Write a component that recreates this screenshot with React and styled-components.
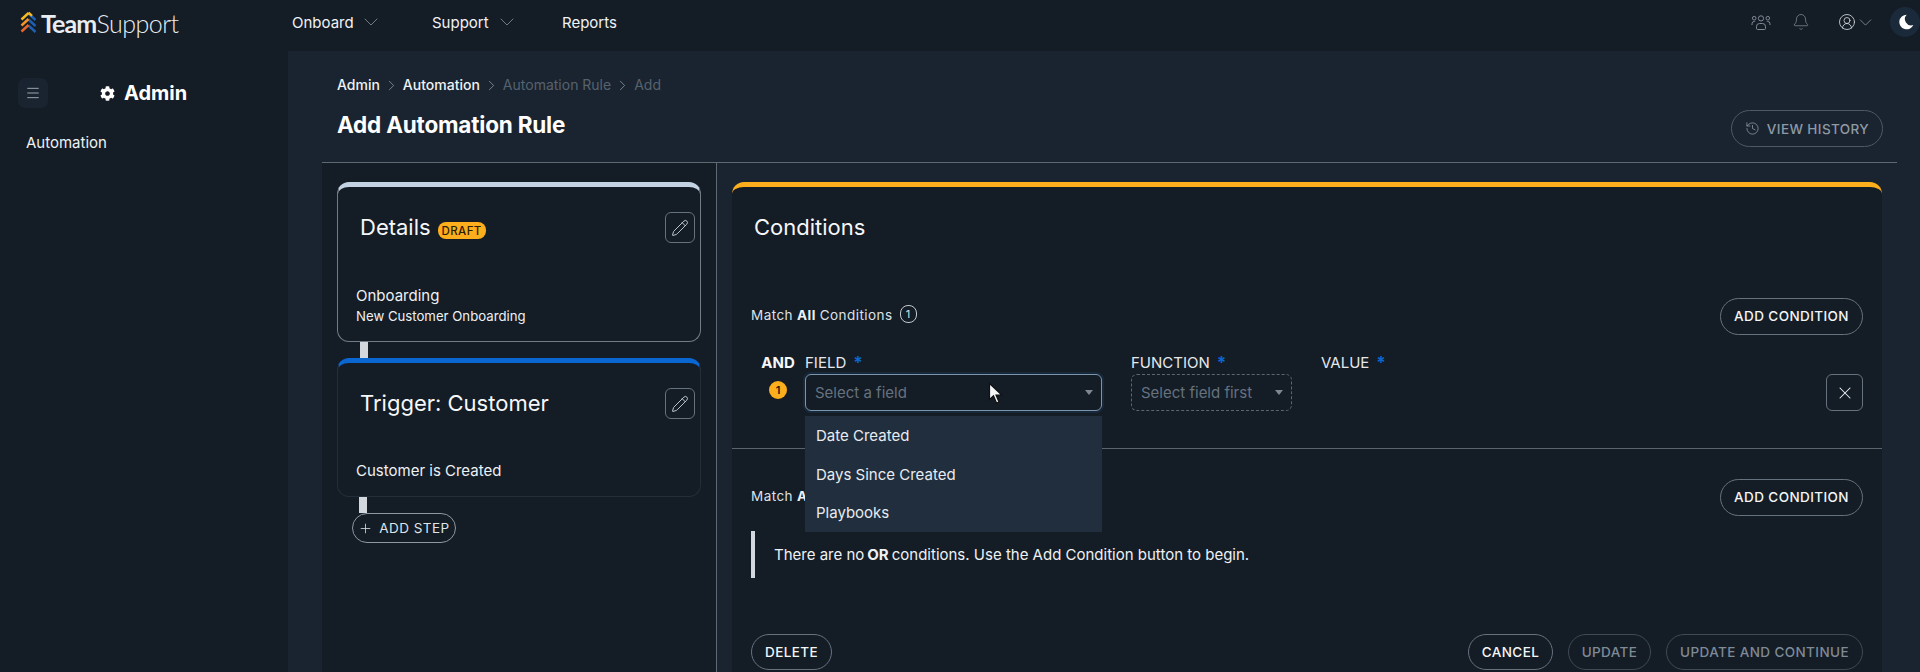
import React from 'react';
import styled, { createGlobalStyle } from 'styled-components';
import { ChevronDown, ChevronRight, Pencil, History, Plus, X, Bell, CircleUserRound, Menu } from 'lucide-react';
import { FaCog } from 'react-icons/fa';

const Global = createGlobalStyle`
  html, body { margin: 0; padding: 0; background: #141c26; }
  body { font-family: Inter, "Liberation Sans", sans-serif; color: #f2f5f8; overflow: hidden; }
  * { box-sizing: border-box; }
`;

const Page = styled.div`
  width: 1920px; height: 672px; overflow: hidden; display: flex; flex-direction: column; background: #141c26; position: relative;
`;
const Header = styled.header`
  height: 51px; flex: none; display: flex; align-items: center; background: #141c26; padding-bottom: 7px;
`;
const LogoBox = styled.div`
  width: 292px; flex: none; display: flex; align-items: center; padding-left: 20px; height: 100%;
`;
const LogoText = styled.div`
  margin-left: 4px; font-family: Lato, Inter, sans-serif; font-size: 25px; line-height: 30px; color: #e8edf2; letter-spacing: -0.5px; font-weight: 300; margin-top: 1px;
  b { font-weight: 700; letter-spacing: -0.9px; }
`;
const Nav = styled.nav`display: flex; align-items: center;`;
const NavItem = styled.div`
  display: flex; align-items: center; font-size: 15px; font-weight: 400; color: #f0f3f6; width: ${p => p.$w}px; gap: ${p => p.$gap || 0}px;
  svg { color: #7c8793; }
`;
const RightIcons = styled.div`
  margin-left: auto; display: flex; align-items: center; color: #808b97; height: 100%;
`;
const IconSlot = styled.span`display: flex; align-items: center; margin-left: ${p => p.$ml || 0}px; color: ${p => p.$c || 'inherit'};`;
const MoonCircle = styled.div`
  width: 30px; height: 30px; margin-left: 14px; border-radius: 50%; background: #1b2a3a; display: flex; align-items: center; padding-left: 8px;
`;

const Body = styled.div`flex: 1; min-height: 0; display: flex;`;
const Sidebar = styled.aside`width: 288px; flex: none; background: #141c26; padding: 27px 18px 0;`;
const SideTop = styled.div`display: flex; align-items: center;`;
const Burger = styled.div`
  width: 30px; height: 30px; border-radius: 7px; background: #1a2430; display: flex; align-items: center; justify-content: center; color: #b4bdc6;
`;
const SideTitle = styled.div`
  margin-left: 52px; display: flex; align-items: center; gap: 9px; font-size: 20px; font-weight: 700; color: #fff;
`;
const SideLink = styled.div`margin: 25px 0 0 8px; font-size: 15px; line-height: 20px; color: #eef2f5;`;

const Main = styled.main`flex: 1; min-width: 0; background: #1a2430; padding: 0 23px 0 34px; display: flex; flex-direction: column;`;
const Head = styled.div`height: 112px; flex: none; padding: 25px 15px 0; border-bottom: 1px solid #5f6974; position: relative;`;
const Crumbs = styled.div`display: flex; align-items: center; font-size: 14px; line-height: 18px; height: 18px;`;
const Crumb = styled.span`color: ${p => p.$dim ? '#56626e' : '#eef2f5'}; font-weight: ${p => p.$dim ? 400 : 450};`;
const CrumbSep = styled.span`display: flex; width: 23px; justify-content: center; color: #9aa4ae;`;
const Title = styled.h1`margin: 15px 0 0; font-size: 22.5px; line-height: 32px; font-weight: 700; color: #fff; letter-spacing: -0.2px;`;
const HistoryBtn = styled.button`
  position: absolute; right: 14px; top: 59px; height: 37px; width: 152px; border: 1px solid #4e5965; background: transparent; border-radius: 19px; color: #8f9aa5;
  font: 450 13.5px Inter, sans-serif; letter-spacing: .4px; display: flex; align-items: center; justify-content: center; gap: 7px; padding: 0;
`;
const Columns = styled.div`flex: 1; min-height: 0; display: flex;`;
const LeftCol = styled.div`width: 395px; flex: none; padding: 19px 15px 0; border-right: 1px solid #5f6974; background: #141c26;`;
const RightCol = styled.div`flex: 1; padding: 19px 15px 0;`;

const Card = styled.section`
  position: relative; height: ${p => p.$h}px; background: #141c26; border-radius: 12px; border: 1px solid ${p => p.$border}; border-top: 5px solid ${p => p.$top};
`;
const CardTitle = styled.div`
  position: absolute; left: 22px; top: 24.5px; font-size: 22px; line-height: 30px; font-weight: 400; color: #f5f7f9; display: flex; align-items: center;
`;
const Draft = styled.span`
  margin-left: 7px; margin-top: 8px; height: 17px; width: 48px; border-radius: 8px; background: #fdae1c; color: #2a2005; font-size: 11.5px; font-weight: 500; letter-spacing: .4px; display: flex; align-items: center; justify-content: center;
`;
const EditBtn = styled.button`
  position: absolute; right: 5px; top: ${p => p.$t}px; width: 30px; height: 31px; background: transparent; border: 1px solid #65717c; border-radius: 6px; color: #c9d0d7; display: flex; align-items: center; justify-content: center; padding: 0;
`;
const CardBody = styled.div`position: absolute; left: 18px; bottom: ${p => p.$b}px; `;
const CardLine = styled.div`font-size: ${p => p.$s || 15}px; line-height: ${p => p.$lh || 20}px; color: #eef1f4;`;
const Connector = styled.div`width: 8px; height: 16px; margin-left: ${p => p.$ml}px; background: #d3d8de;`;

const Pill = styled.button`
  height: ${p => p.$h || 36}px; width: ${p => p.$w}px; flex: none; border-radius: 20px; border: 1px solid ${p => p.$off ? '#3f4a56' : '#66727e'}; background: transparent;
  color: ${p => p.$off ? '#7f8a96' : '#f3f6f8'}; font: 450 13.5px Inter, sans-serif; letter-spacing: .4px; display: flex; align-items: center; justify-content: center; gap: 6px; padding: 0;
`;
const AddStep = styled(Pill)`margin-left: 15px; color: #dfe4e9; font-weight: 400; border-color: #8d98a3; letter-spacing: .45px;`;

const Panel = styled.section`
  position: relative; height: 520px; background: #141c26; border-radius: 12px 12px 0 0; border-top: 5px solid #fdae1c;
`;
const PanelTitle = styled.div`padding: 24.5px 23px 0 23px; margin-left: -1px; font-size: 22px; line-height: 30px; color: #f5f7f9; height: 74px;`;
const Group = styled.div`height: ${p => p.$h}px; padding: ${p => p.$pt}px 19px 0; border-bottom: ${p => p.$line ? '1px solid #59646f' : 'none'};`;
const GroupHead = styled.div`display: flex; align-items: center; justify-content: space-between; height: 36px;`;
const MatchText = styled.div`
  font-size: 13.5px; letter-spacing: .45px; font-weight: 400; color: #dde2e7; display: flex; align-items: center; margin-top: -2px;
  b { font-weight: 700; margin: 0 4px; color: #eef1f4; }
`;
const CountBadge = styled.span`
  margin-left: 7px; margin-top: -3px; width: 17px; height: 18px; border: 1px solid #c2c9d0; border-radius: 8px; font-size: 11px; display: flex; align-items: center; justify-content: center;
`;
const Row = styled.div`display: flex; margin-top: 19px; position: relative; height: 58px;`;
const AndCol = styled.div`width: 54px; flex: none; display: flex; flex-direction: column; align-items: center;`;
const AndLabel = styled.div`font-size: 15px; font-weight: 700; line-height: 20px; color: #f5f7f9;`;
const Step = styled.span`
  margin: 8px 0 0; width: 18px; height: 18px; border-radius: 50%; background: #fdae1c; color: #1d1705; font-size: 11px; font-weight: 600; display: flex; align-items: center; justify-content: center;
`;
const Field = styled.div`width: ${p => p.$w}px; flex: none; margin-right: ${p => p.$mr}px; position: relative;`;
const FieldLabel = styled.div`font-size: 15px; line-height: 20px; color: #e4e8ec; display: flex; gap: 7px; height: 21px;`;
const Star = styled.span`color: #0a66d0; font-weight: 700; font-size: 17px;`;
const Select = styled.div`
  height: 37px; border-radius: 6px; padding: 0 8px 0 9px; display: flex; align-items: center; justify-content: space-between; color: #66727e; font-size: 15px;
  border: 1px ${p => p.$dashed ? 'dashed #5a6672' : 'solid #7b95ad'};
  box-shadow: ${p => p.$dashed ? 'none' : '0 0 0 2px #17283a'};
`;
const Caret = styled.span`width: 0; height: 0; border-left: 4px solid transparent; border-right: 4px solid transparent; border-top: 5px solid #7c8793;`;
const Menu_ = styled.div`
  position: absolute; left: 0; right: 0; top: 63px; height: 116px; background: #202e3e; z-index: 3;
`;
const MenuItem = styled.div`height: 38.5px; display: flex; align-items: center; padding: 1px 11px 0; font-size: 15px; color: #e8ecf0;`;
const CloseBtn = styled.button`
  position: absolute; right: 0; top: 21px; width: 37px; height: 37px; border: 1px solid #66727e; border-radius: 6px; background: transparent; color: #eef1f4; display: flex; align-items: center; justify-content: center; padding: 0;
`;
const Quote = styled.div`
  margin-top: 16px; height: 47px; border-left: 4px solid #d3d8de; padding-left: 19px; display: flex; align-items: center; font-size: 15px; color: #eef1f4;
  b { font-weight: 700; margin: 0 3px; }
`;
const Footer = styled.div`display: flex; align-items: center; margin-top: 56px; gap: 15px;`;
const Spacer = styled.div`flex: 1;`;
const Cursor = styled.svg`position: absolute; left: 988px; top: 382px; z-index: 5;`;

const LogoMark = () => (
  <svg width="17" height="23" viewBox="0 0 17 23" fill="none" strokeWidth="2.4" strokeLinecap="butt">
    <path d="M8.5 2.5 L15.5 9 M8.5 8.5 L15.5 15 M8.5 14.5 L15.5 21" stroke="#1f5fb0" />
    <path d="M8.5 2 L1.5 8.5" stroke="#f6b91f" />
    <path d="M8.5 1.5 L12 4.8" stroke="#f6b91f" />
    <path d="M8.5 8 L1.5 14.5" stroke="#f4952a" />
    <path d="M8.5 14 L1.5 20.5" stroke="#e8652c" />
  </svg>
);
const People = () => (
  <svg width="20" height="15" viewBox="0 0 20 15" fill="none" stroke="currentColor" strokeWidth="1">
    <circle cx="10" cy="3.4" r="2.6"/><circle cx="3.2" cy="3.2" r="1.8"/><circle cx="16.8" cy="3.2" r="1.8"/>
    <path d="M5.5 13.5 v-2 a3 3 0 0 1 3 -3 h3 a3 3 0 0 1 3 3 v2 a1 1 0 0 1 -1 1 h-7 a1 1 0 0 1 -1 -1z"/>
    <path d="M1 10 v-1.2 a2.4 2.4 0 0 1 2.4 -2.4 h0.8 M19 10 v-1.2 a2.4 2.4 0 0 0 -2.4 -2.4 h-0.8"/>
  </svg>
);
const MoonIcon = () => (
  <svg width="16" height="16" viewBox="0 0 24 24"><path fill="#fff" d="M13 1a11 11 0 1 0 10 15.5A9.5 9.5 0 0 1 13 1z"/></svg>
);
const Edit = ({ t }) => <EditBtn $t={t}><Pencil size={18} strokeWidth={1.25} /></EditBtn>;

export default function App() {
  return (
    <Page>
      <Global />
      <Header>
        <LogoBox>
          <LogoMark />
          <LogoText><b>Team</b>Support</LogoText>
        </LogoBox>
        <Nav>
          <NavItem $w={140} $gap={5}>Onboard <ChevronDown size={24} strokeWidth={0.9} /></NavItem>
          <NavItem $w={130} $gap={6}>Support <ChevronDown size={24} strokeWidth={0.9} /></NavItem>
          <NavItem $w={70}>Reports</NavItem>
        </Nav>
        <RightIcons>
          <IconSlot><People /></IconSlot>
          <IconSlot $ml={21}><Bell size={18} strokeWidth={1} /></IconSlot>
          <IconSlot $ml={28} $c="#d5dade"><CircleUserRound size={18} strokeWidth={1.1} /></IconSlot>
          <IconSlot $ml={-1}><ChevronDown size={21} strokeWidth={1} /></IconSlot>
          <MoonCircle><MoonIcon /></MoonCircle>
        </RightIcons>
      </Header>
      <Body>
        <Sidebar>
          <SideTop>
            <Burger><Menu size={16} strokeWidth={1.25} /></Burger>
            <SideTitle><FaCog size={15} /> Admin</SideTitle>
          </SideTop>
          <SideLink>Automation</SideLink>
        </Sidebar>
        <Main>
          <Head>
            <Crumbs>
              <Crumb>Admin</Crumb><CrumbSep><ChevronRight size={17} strokeWidth={1} /></CrumbSep>
              <Crumb>Automation</Crumb><CrumbSep><ChevronRight size={17} strokeWidth={1} /></CrumbSep>
              <Crumb $dim>Automation Rule</Crumb><CrumbSep><ChevronRight size={17} strokeWidth={1} /></CrumbSep>
              <Crumb $dim>Add</Crumb>
            </Crumbs>
            <Title>Add Automation Rule</Title>
            <HistoryBtn><History size={15} strokeWidth={1.25} /> VIEW HISTORY</HistoryBtn>
          </Head>
          <Columns>
            <LeftCol>
              <Card $h={160} $top="#c3d3e3" $border="#727c87">
                <CardTitle>Details<Draft>DRAFT</Draft></CardTitle>
                <Edit t={25} />
                <CardBody $b={14}>
                  <CardLine>Onboarding</CardLine>
                  <CardLine $s={13.2} $lh={21}>New Customer Onboarding</CardLine>
                </CardBody>
              </Card>
              <Connector $ml={23} />
              <Card $h={139} $top="#0a66d0" $border="#242e39">
                <CardTitle>Trigger: Customer</CardTitle>
                <Edit t={25} />
                <CardBody $b={15}>
                  <CardLine>Customer is Created</CardLine>
                </CardBody>
              </Card>
              <Connector $ml={22} />
              <AddStep $w={104} $h={30}><Plus size={15} strokeWidth={1.25} /> ADD STEP</AddStep>
            </LeftCol>
            <RightCol>
              <Panel>
                <PanelTitle>Conditions</PanelTitle>
                <Group $h={188} $pt={37} $line>
                  <GroupHead>
                    <MatchText>Match<b>All</b>Conditions<CountBadge>1</CountBadge></MatchText>
                    <Pill $w={143} $h={37}>ADD CONDITION</Pill>
                  </GroupHead>
                  <Row>
                    <AndCol><AndLabel>AND</AndLabel><Step>1</Step></AndCol>
                    <Field $w={297} $mr={29}>
                      <FieldLabel>FIELD <Star>*</Star></FieldLabel>
                      <Select><span>Select a field</span><Caret /></Select>
                      <Menu_>
                        <MenuItem>Date Created</MenuItem>
                        <MenuItem>Days Since Created</MenuItem>
                        <MenuItem>Playbooks</MenuItem>
                      </Menu_>
                    </Field>
                    <Field $w={161} $mr={29}>
                      <FieldLabel>FUNCTION <Star>*</Star></FieldLabel>
                      <Select $dashed><span>Select field first</span><Caret /></Select>
                    </Field>
                    <Field $w={120} $mr={0}>
                      <FieldLabel>VALUE <Star>*</Star></FieldLabel>
                    </Field>
                    <CloseBtn><X size={20} strokeWidth={1.25} /></CloseBtn>
                  </Row>
                </Group>
                <Group $h={254} $pt={30}>
                  <GroupHead>
                    <MatchText>Match<b>Any</b>Conditions</MatchText>
                    <Pill $w={143} $h={37}>ADD CONDITION</Pill>
                  </GroupHead>
                  <Quote>There are no<b>OR</b>conditions. Use the Add Condition button to begin.</Quote>
                  <Footer>
                    <Pill $w={81}>DELETE</Pill>
                    <Spacer />
                    <Pill $w={85}>CANCEL</Pill>
                    <Pill $w={83} $off>UPDATE</Pill>
                    <Pill $w={197} $off>UPDATE AND CONTINUE</Pill>
                  </Footer>
                </Group>
              </Panel>
            </RightCol>
          </Columns>
        </Main>
      </Body>
      <Cursor width="16" height="24" viewBox="0 0 16 24">
        <path d="M1.5 1.5 L1.5 17.5 L5.5 13.8 L8.5 21 L11 20 L8 13 L13.5 12.8 Z" fill="#f4f6f8" stroke="#111" strokeWidth="1.2" />
      </Cursor>
    </Page>
  );
}
